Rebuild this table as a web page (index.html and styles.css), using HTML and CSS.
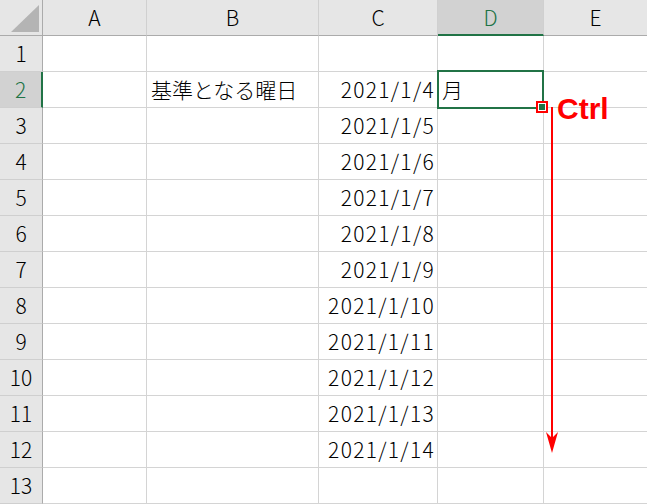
FILE: index.html
```html
<!DOCTYPE html>
<html lang="ja">
<head>
<meta charset="utf-8">
<link rel="stylesheet" href="styles.css">
</head>
<body>
<div class="sheet">
  <div class="grid">
    <div class="hd corner"><svg class="tri" width="28" height="27" viewBox="0 0 28 27"><polygon points="28,0 28,27 0,27" fill="#b4b4b4"/></svg></div>
    <div class="hd col">A</div>
    <div class="hd col">B</div>
    <div class="hd col">C</div>
    <div class="hd col sel-col">D</div>
    <div class="hd col">E</div>

    <div class="hd row">1</div><div class="c"></div><div class="c"></div><div class="c"></div><div class="c"></div><div class="c"></div>
    <div class="hd row sel-row">2</div><div class="c"></div><div class="c txt">基準となる曜日</div><div class="c num">2021/1/4</div><div class="c txt d2">月<span class="selbox"></span><span class="handle"><span class="handle-in"></span></span></div><div class="c"></div>
    <div class="hd row">3</div><div class="c"></div><div class="c"></div><div class="c num">2021/1/5</div><div class="c"></div><div class="c"></div>
    <div class="hd row">4</div><div class="c"></div><div class="c"></div><div class="c num">2021/1/6</div><div class="c"></div><div class="c"></div>
    <div class="hd row">5</div><div class="c"></div><div class="c"></div><div class="c num">2021/1/7</div><div class="c"></div><div class="c"></div>
    <div class="hd row">6</div><div class="c"></div><div class="c"></div><div class="c num">2021/1/8</div><div class="c"></div><div class="c"></div>
    <div class="hd row">7</div><div class="c"></div><div class="c"></div><div class="c num">2021/1/9</div><div class="c"></div><div class="c"></div>
    <div class="hd row">8</div><div class="c"></div><div class="c"></div><div class="c num">2021/1/10</div><div class="c"></div><div class="c"></div>
    <div class="hd row">9</div><div class="c"></div><div class="c"></div><div class="c num">2021/1/11</div><div class="c"></div><div class="c"></div>
    <div class="hd row">10</div><div class="c"></div><div class="c"></div><div class="c num">2021/1/12</div><div class="c"></div><div class="c"></div>
    <div class="hd row">11</div><div class="c"></div><div class="c"></div><div class="c num">2021/1/13</div><div class="c"></div><div class="c"></div>
    <div class="hd row">12</div><div class="c"></div><div class="c"></div><div class="c num">2021/1/14</div><div class="c"></div><div class="c"></div>
    <div class="hd row">13</div><div class="c"></div><div class="c"></div><div class="c"></div><div class="c"></div><div class="c"></div>
  </div>
  <svg class="arrow" width="20" height="360" viewBox="0 0 20 360">
    <rect x="9" y="0" width="2" height="335" fill="#ff0000"/>
    <polygon points="4,325 10,331 16,325 10,346" fill="#ff0000"/>
  </svg>
  <div class="ctrl">Ctrl</div>
</div>
</body>
</html>
```
FILE: styles.css
```css
html, body {
  margin: 0;
  padding: 0;
  background: #ffffff;
  overflow: hidden;
}
.sheet {
  position: relative;
  width: 647px;
  height: 504px;
  overflow: hidden;
  font-family: "Noto Sans CJK JP", "Noto Sans", sans-serif;
  font-size: 21px;
  font-weight: 300;
  color: #000;
}
.grid {
  display: grid;
  grid-template-columns: 43px 104px 172px 119px 106px 104px;
  grid-auto-rows: 36px;
  width: 648px;
}
.c {
  box-sizing: border-box;
  border-right: 1px solid #d4d4d4;
  border-bottom: 1px solid #d4d4d4;
  display: flex;
  align-items: center;
  white-space: nowrap;
  line-height: 1;
}
.txt {
  padding-left: 4px;
}
.num {
  justify-content: flex-end;
  padding-right: 2px;
  letter-spacing: 1.3px;
}
.hd {
  box-sizing: border-box;
  background: #e6e6e6;
  display: flex;
  align-items: center;
  justify-content: center;
  line-height: 1;
}
.col {
  border-right: 1px solid #d0d0d0;
  border-bottom: 1px solid #ababab;
}
.corner {
  border-right: 1px solid #ababab;
  border-bottom: 1px solid #ababab;
  justify-content: flex-start;
  align-items: flex-start;
}
.tri {
  display: block;
  margin: 5px 0 0 11px;
}
.row {
  border-right: 1px solid #ababab;
  border-bottom: 1px solid #cfcfcf;
}
.sel-col {
  background: #d2d2d2;
  color: #217346;
  border-bottom: 2px solid #217346;
}
.sel-row {
  background: #d2d2d2;
  color: #217346;
  border-right: 2px solid #217346;
}
.d2 {
  position: relative;
}
.selbox {
  position: absolute;
  left: -1px;
  top: -2px;
  width: 107px;
  height: 39px;
  box-sizing: border-box;
  border: 2px solid #217346;
}
.handle {
  position: absolute;
  left: 98px;
  top: 29px;
  width: 12px;
  height: 12px;
  box-sizing: border-box;
  border: 2px solid #ff0000;
  padding: 1px;
  background: #ffffff;
}
.handle-in {
  display: block;
  width: 6px;
  height: 6px;
  background: #217346;
}
.arrow {
  position: absolute;
  left: 542px;
  top: 107px;
}
.ctrl {
  position: absolute;
  left: 557px;
  top: 94px;
  font-family: "Liberation Sans", Arial, sans-serif;
  font-weight: bold;
  font-size: 30px;
  line-height: 1;
  color: #ff0000;
}
```
